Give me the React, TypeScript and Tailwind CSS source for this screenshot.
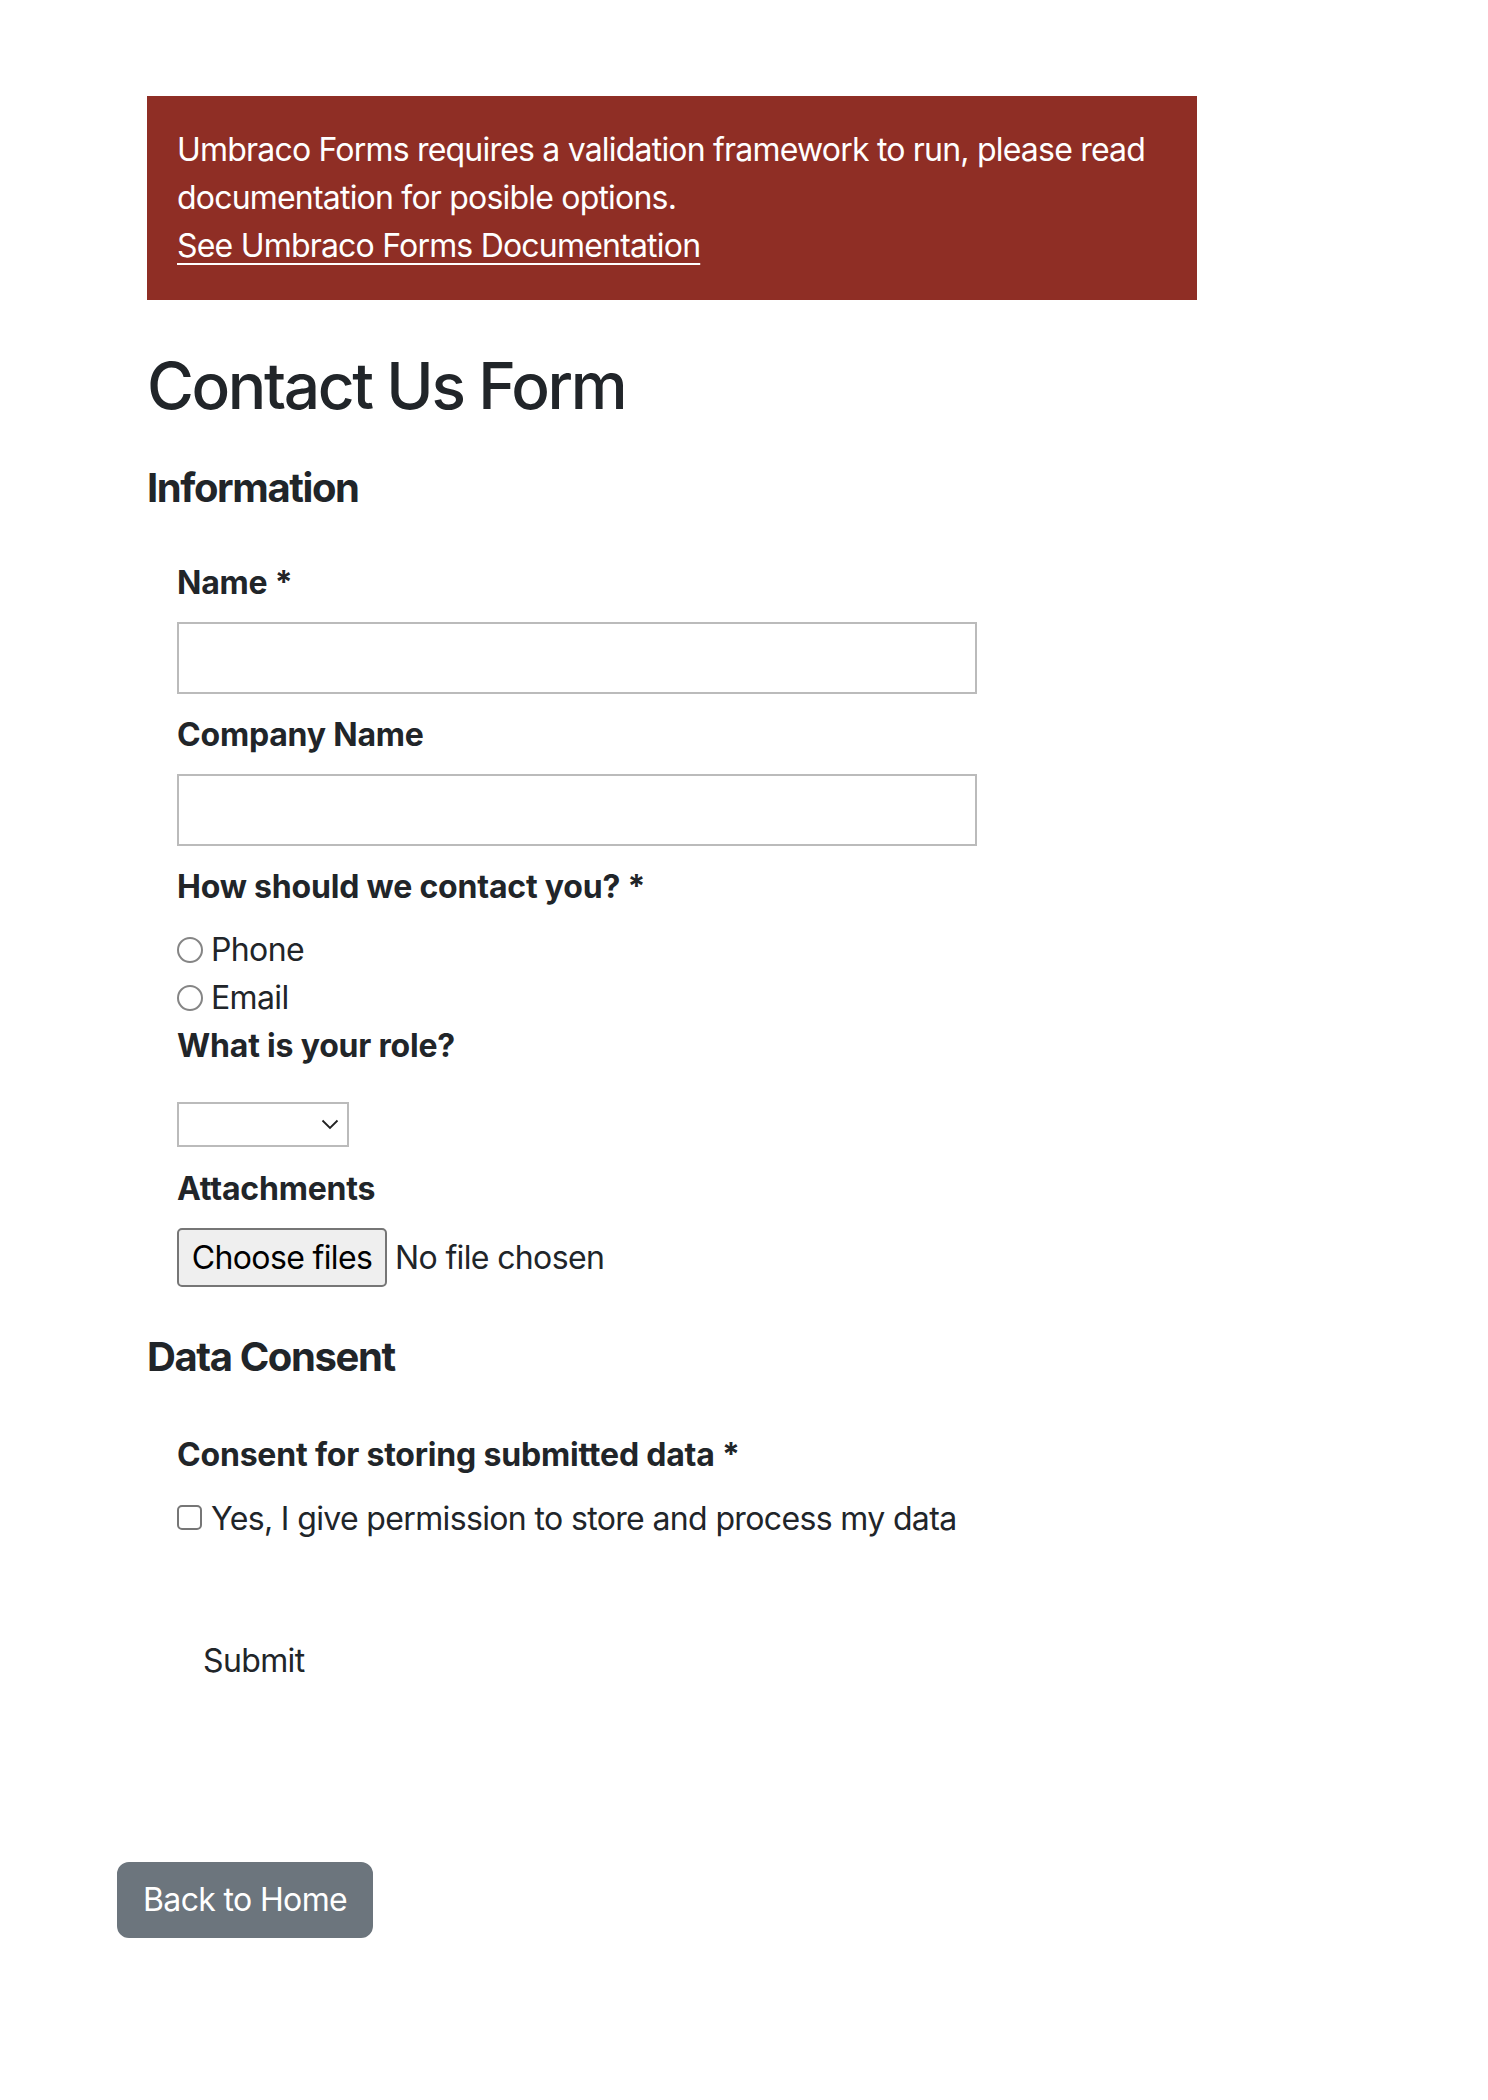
import React from "react";

function Label({ children, className = "" }: { children: React.ReactNode; className?: string }) {
  return (
    <div className={"text-[32px] leading-[48px] font-bold tracking-[-0.006em] " + className}>{children}</div>
  );
}

function Radio({ label, className = "" }: { label: string; className?: string }) {
  return (
    <label className={"flex items-center h-[48px] text-[32px] leading-[48px] tracking-[-0.02em] " + className}>
      <span className="inline-block w-[26px] h-[26px] rounded-full border-2 border-[#858585] bg-white mr-[8px]" />
      <span>{label}</span>
    </label>
  );
}

export default function App() {
  return (
    <div
      className="min-h-[2100px] bg-white text-[#212529]"
      style={{ fontFamily: "Inter, 'Noto Sans', sans-serif" }}
    >
      <div className="pl-[117px] pt-[96px]">
        <div className="ml-[30px] w-[1050px]">
          <div className="bg-[#8f2e25] text-white p-[30px] text-[32px] leading-[48px] tracking-[-0.025em]">
            <div className="whitespace-nowrap">Umbraco Forms requires a validation framework to run, please read</div>
            <div className="whitespace-nowrap">documentation for posible options.</div>
            <a href="#" className="whitespace-nowrap underline underline-offset-[6px] decoration-2">
              See Umbraco Forms Documentation
            </a>
          </div>

          <h1 className="mt-[46px] text-[64px] leading-[80px] font-medium tracking-[-0.037em]">Contact Us Form</h1>

          <form>
            <div className="mt-[30px] text-[40px] leading-[64px] font-bold tracking-[-0.035em]">Information</div>
            <div className="pl-[30px]">
              <Label className="mt-[39px]">Name *</Label>
              <div className="mt-[15px] w-[800px] h-[72px] border-2 border-[#bbbbbb] bg-white" />

              <Label className="mt-[17px]">Company Name</Label>
              <div className="mt-[15px] w-[800px] h-[72px] border-2 border-[#bbbbbb] bg-white" />

              <Label className="mt-[17px]">How should we contact you? *</Label>
              <Radio label="Phone" className="mt-[15px]" />
              <Radio label="Email" />

              <Label>What is your role?</Label>
              <div className="mt-[32px] w-[172px] h-[45px] border-2 border-[#bbbbbb] bg-white flex items-center justify-end pr-[8px]">
                <svg width="18" height="11" viewBox="0 0 18 11" fill="none">
                  <path d="M1.5 1.5 L9 9 L16.5 1.5" stroke="#222" strokeWidth="1.8" />
                </svg>
              </div>

              <Label className="mt-[18px]">Attachments</Label>
              <div className="mt-[15px] flex items-center text-[32px] leading-[48px] tracking-[-0.02em]">
                <button
                  type="button"
                  className="h-[59px] w-[210px] rounded-[5px] border-2 border-[#767676] bg-[#efefef] text-[32px] text-black tracking-[-0.02em]"
                >
                  Choose files
                </button>
                <span className="ml-[8px]">No file chosen</span>
              </div>
            </div>

            <div className="mt-[38px] text-[40px] leading-[64px] font-bold tracking-[-0.035em]">Data Consent</div>
            <div className="pl-[30px]">
              <Label className="mt-[42px]">Consent for storing submitted data *</Label>
              <label className="mt-[16px] flex items-center h-[48px] text-[32px] leading-[48px] tracking-[-0.02em]">
                <span className="inline-block w-[25px] h-[25px] rounded-[5px] border-2 border-[#767676] bg-white mr-[9px] -mt-[4px]" />
                <span>Yes, I give permission to store and process my data</span>
              </label>

              <button
                type="button"
                className="mt-[80px] border-2 border-transparent bg-transparent px-[24px] py-[12px] text-[32px] leading-[48px] text-[#212529] tracking-[-0.02em]"
              >
                Submit
              </button>
            </div>
          </form>
        </div>

        <a
          href="#"
          className="mt-[163px] inline-block rounded-[12px] border-2 border-[#6c757d] bg-[#6c757d] px-[24px] py-[12px] text-[32px] leading-[48px] text-white tracking-[-0.02em]"
        >
          Back to Home
        </a>
      </div>
    </div>
  );
}
